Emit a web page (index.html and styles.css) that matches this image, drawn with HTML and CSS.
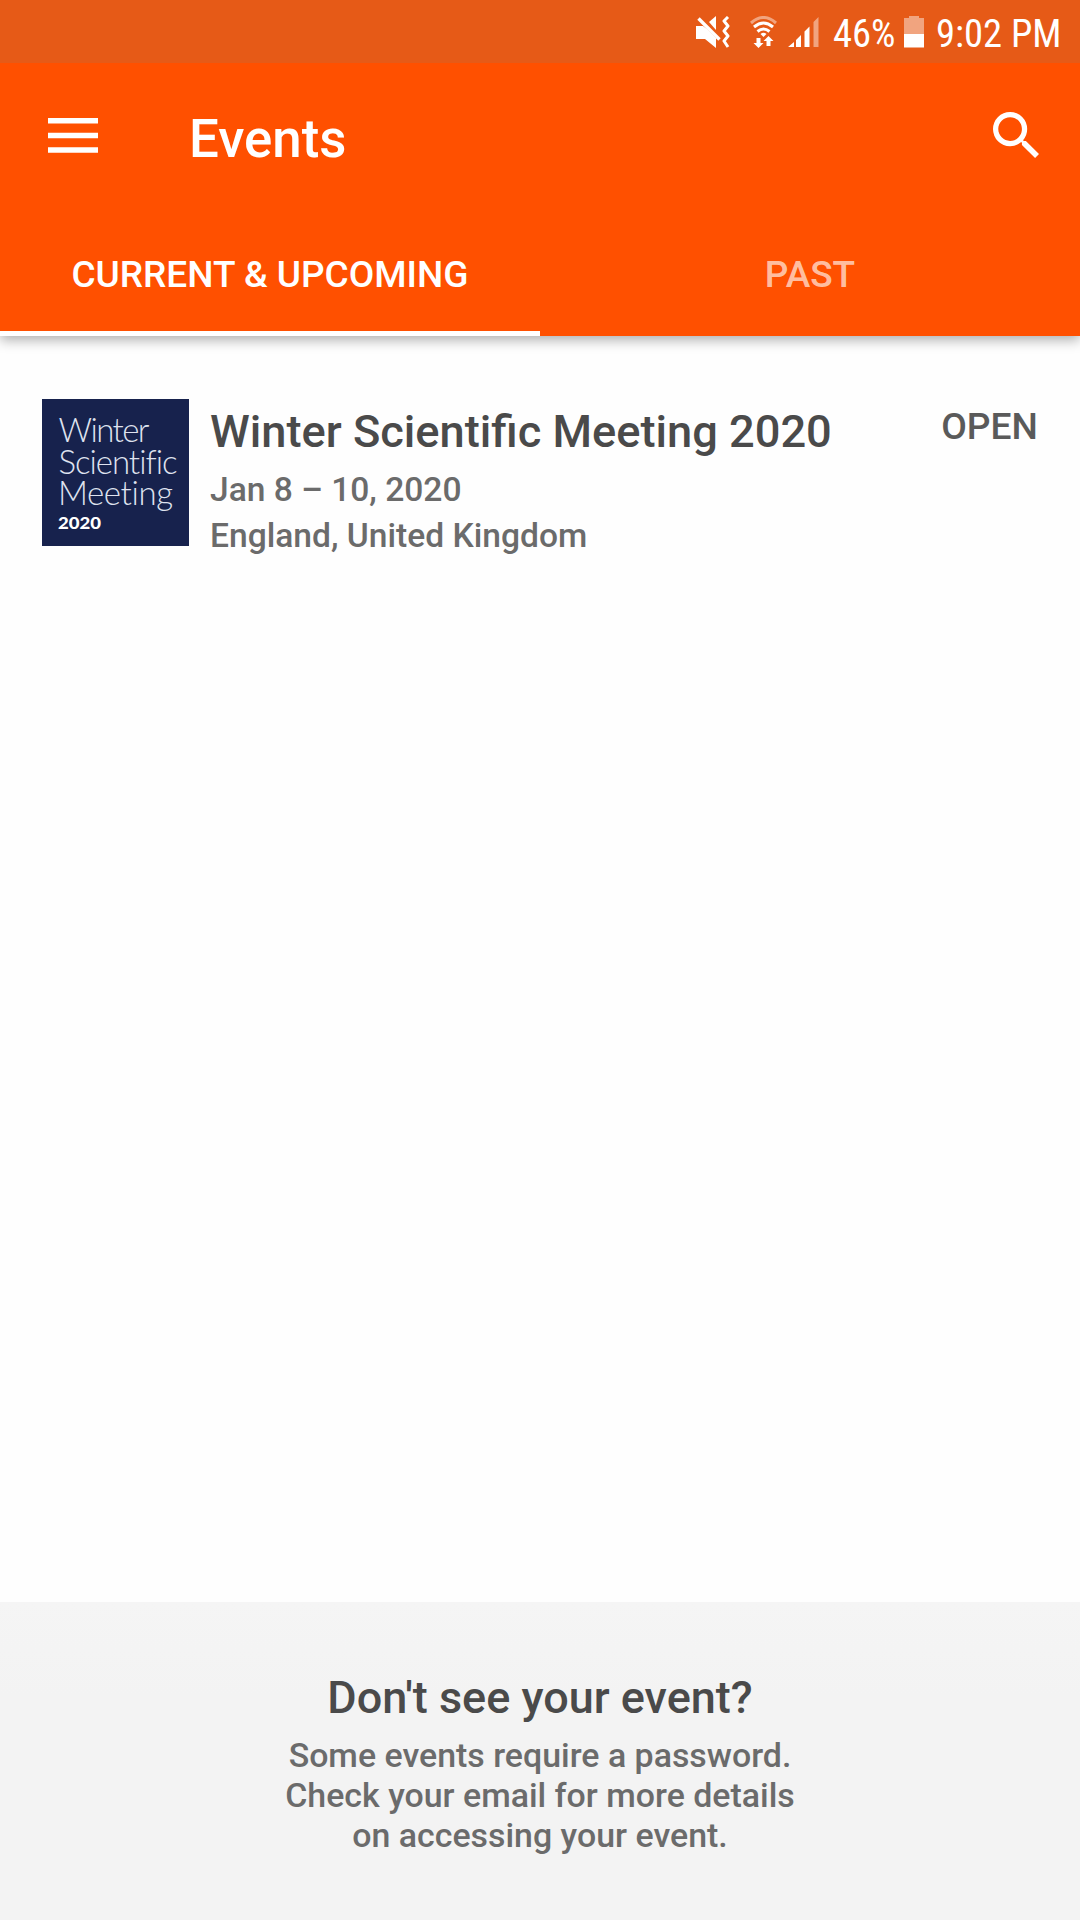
FILE: index.html
```html
<!DOCTYPE html>
<html lang="en">
<head>
<meta charset="utf-8">
<title>Events</title>
<link rel="stylesheet" href="styles.css">
</head>
<body>
<div class="screen">
  <header class="header">
    <div class="status">
      <svg class="status-icons" width="124" height="33" viewBox="0 0 124 33" fill="#fff">
        <path d="M0 10h7l4 3 9 9v10L9 23H0z"/>
        <path d="M13 6l7-6v14z"/>
        <path d="M2.500 2.500l21 21" stroke="#fff" stroke-width="3.400"/>
        <path d="M32 1l-4 4 4 5-4 5 4 5-4 5 4 6" fill="none" stroke="#fff" stroke-width="3" stroke-linejoin="round"/>
        <g fill="none" stroke="#fff" stroke-width="3">
          <path d="M55 7q12.500-11 25 0" opacity=".45"/>
          <path d="M58 11q9.500-8 19 0"/>
          <path d="M61.500 15.500q6-5 12 0"/>
        </g>
        <path d="M64.500 18q3-2.500 6 0l-3 3z"/>
        <path d="M60.500 22h4v5h3l-5 5-5-5h3zM70.500 30v-5h-3l5-5 5 5h-3v5z"/>
        <path d="M92 31l6-5v5zM100 24l5-5v12h-5zM108.500 15.500l5-5V31h-5z"/>
        <path d="M117.500 6l5-5v30h-5z" opacity=".45"/>
      </svg>
      <span class="status-text battery-level">46%</span>
      <svg class="battery" width="20" height="32" viewBox="0 0 20 32" fill="#fff">
        <path d="M0 2h5V0h10v2h5v16H0z" opacity=".45"/>
        <path d="M0 18h20v13.500H0z"/>
      </svg>
      <span class="status-text clock">9:02 PM</span>
    </div>
    <div class="toolbar">
      <svg class="menu" width="50" height="35" viewBox="0 0 50 35" fill="#fff"><path d="M0 0h50v5.500H0zM0 14.700h50v5.500H0zM0 29.300h50v5.500H0z"/></svg>
      <h1 class="title">Events</h1>
      <svg class="search" width="46" height="46" viewBox="3 3 17.490 17.490" fill="#fff"><path d="M15.500 14h-.79l-.28-.27A6.471 6.471 0 0 0 16 9.500 6.500 6.500 0 1 0 9.500 16c1.610 0 3.090-.59 4.230-1.570l.27.280v.790l5 4.990L20.490 19l-4.990-5zm-6 0C7.010 14 5 11.990 5 9.500S7.010 5 9.500 5 14 7.010 14 9.500 11.990 14 9.500 14z"/></svg>
    </div>
    <nav class="tabs">
      <a class="tab active">CURRENT &amp; UPCOMING</a>
      <a class="tab">PAST</a>
    </nav>
  </header>
  <main class="list">
    <article class="event">
      <svg class="thumb" width="147" height="147" viewBox="0 0 147 147">
        <rect width="147" height="147" fill="#17224d"/>
        <g class="thumb-name">
          <text x="16.500" y="43" textLength="91">Winter</text>
          <text x="16.500" y="74.500" textLength="119">Scientific</text>
          <text x="16" y="105.500" textLength="115">Meeting</text>
        </g>
        <text class="thumb-year" x="16" y="129.500" textLength="43" lengthAdjust="spacingAndGlyphs">2020</text>
      </svg>
      <div class="info">
        <h2 class="name">Winter Scientific Meeting 2020</h2>
        <p class="meta">Jan 8 – 10, 2020</p>
        <p class="meta">England, United Kingdom</p>
      </div>
      <span class="open">OPEN</span>
    </article>
  </main>
  <footer class="help">
    <h2 class="help-title">Don't see your event?</h2>
    <p class="help-text">Some events require a password.<br>Check your email for more details<br>on accessing your event.</p>
  </footer>
</div>
</body>
</html>
```
FILE: styles.css
```css
* { box-sizing: border-box; margin: 0; padding: 0; }
body { font-family: Roboto, sans-serif; font-weight: 500; background: #fefefe; }
.screen { width: 1080px; height: 1920px; display: flex; flex-direction: column; overflow: hidden; }
.header { height: 336px; background: #ff5000; color: #fff; box-shadow: 0 4px 12px rgba(0,0,0,.32); display: flex; flex-direction: column; }
.status { height: 63px; background: #e65a17; display: flex; align-items: flex-start; padding: 16px 16px 0 696px; }
.status-icons { flex: none; }
.status-text { font-family: "Roboto Condensed", Roboto, sans-serif; font-stretch: 75%; font-weight: 400; font-size: 38.600px; line-height: 44px; margin-top: -4px; white-space: nowrap; }
.battery-level { margin-left: 13px; width: 62px; }
.battery { margin-left: 9px; flex: none; }
.clock { margin-left: 12px; }
.toolbar { height: 147px; display: flex; align-items: flex-start; padding: 49px 41px 0 48px; }
.menu { margin-top: 6px; }
.title { font-size: 52.800px; line-height: 62px; font-weight: 500; margin: -4px 0 0 91px; }
.search { margin-left: auto; }
.tabs { flex: 1; display: flex; }
.tab { flex: 1; text-align: center; font-size: 37px; line-height: 44px; padding-top: 43px; color: rgba(255,255,255,.65); }
.active { color: #fff; border-bottom: 5px solid #fff; }
.list { flex: 1; padding: 63px 42px 0; }
.event { display: flex; align-items: flex-start; }
.thumb { flex: none; }
.thumb-name { font-family: Lato, sans-serif; font-weight: 300; font-size: 33px; font-variant-ligatures: none; fill: #dfe2ef; }
.thumb-year { font-family: Lato, sans-serif; font-weight: 900; font-size: 17px; fill: #fff; }
.info { margin-left: 21px; flex: 1; }
.name { font-size: 45.200px; line-height: 54px; font-weight: 500; color: #4a4a4a; margin: 6px 0 8px; white-space: nowrap; }
.meta { font-size: 33.600px; line-height: 46px; color: #6b6b6b; }
.open { font-size: 37.200px; line-height: 44px; color: #5a5a5a; margin-top: 5px; }
.help { height: 318px; background: linear-gradient(#f5f5f5, #f3f3f3 30%); text-align: center; padding-top: 69px; }
.help-title { font-size: 45px; line-height: 54px; font-weight: 500; color: #4a4a4a; }
.help-text { font-size: 33.900px; line-height: 40px; color: #6b6b6b; margin-top: 11px; }
```
